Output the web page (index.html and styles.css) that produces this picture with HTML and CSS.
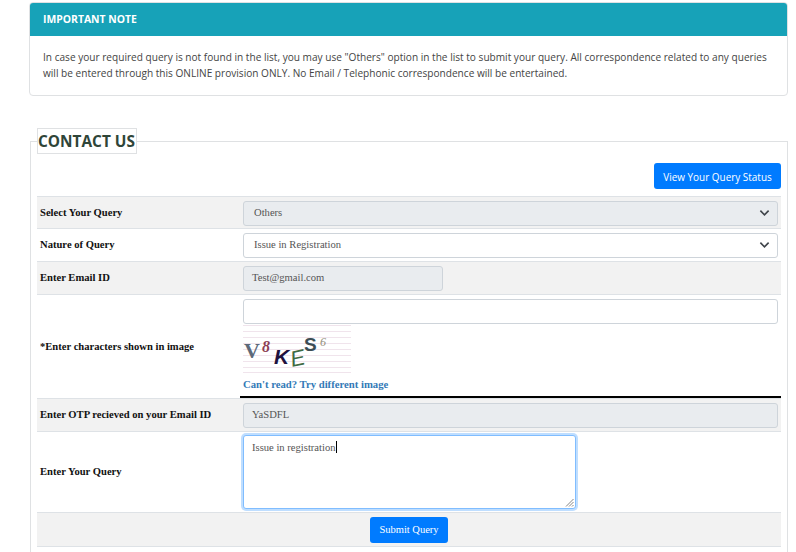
FILE: index.html
```html
<!DOCTYPE html>
<html lang="en">
<head>
<meta charset="utf-8">
<title>Contact Us</title>
<link rel="stylesheet" href="styles.css">
</head>
<body>
<main class="page">
  <section class="note">
    <h2 class="note-head">IMPORTANT NOTE</h2>
    <p class="note-body">In case your required query is not found in the list, you may use "Others" option in the list to submit your query. All correspondence related to any queries will be entered through this ONLINE provision ONLY. No Email / Telephonic correspondence will be entertained.</p>
  </section>
  <fieldset class="contact">
    <legend class="contact-title">CONTACT US</legend>
    <div class="status-row"><button class="btn btn-status" type="button">View Your Query Status</button></div>
    <table class="form-table">
      <tbody>
        <tr class="shade first">
          <th>Select Your Query</th>
          <td><div class="select disabled"><span>Others</span><svg class="chev" viewBox="0 0 12 8"><path d="M1.5 1.5 6 6l4.5-4.5" /></svg></div></td>
        </tr>
        <tr>
          <th>Nature of Query</th>
          <td><div class="select"><span>Issue in Registration</span><svg class="chev" viewBox="0 0 12 8"><path d="M1.5 1.5 6 6l4.5-4.5" /></svg></div></td>
        </tr>
        <tr class="shade">
          <th>Enter Email ID</th>
          <td><div class="field disabled short">Test@gmail.com</div></td>
        </tr>
        <tr>
          <th>*Enter characters shown in image</th>
          <td class="captcha-cell">
            <div class="field"></div>
            <svg class="captcha" viewBox="0 0 108 50" role="img" aria-label="captcha">
              <g class="captcha-lines">
                <path d="M0 1.5h108M0 7.5h108M0 13.5h108M0 19.5h108M0 25.5h108M0 31.5h108M0 37.5h108M0 43.5h108M0 48.5h108" />
              </g>
              <text class="c-v" x="1" y="34">V</text>
              <text class="c-8" x="19" y="28">8</text>
              <text class="c-k" x="31" y="40">K</text>
              <text class="c-e" transform="translate(49 43) rotate(-12)">E</text>
              <text class="c-s" x="61" y="27">S</text>
              <text class="c-6" x="77" y="22">6</text>
            </svg>
            <a class="refresh" href="#">Can't read? Try different image</a>
          </td>
        </tr>
        <tr class="shade">
          <th>Enter OTP recieved on your Email ID</th>
          <td><div class="field disabled">YaSDFL</div></td>
        </tr>
        <tr>
          <th>Enter Your Query</th>
          <td class="query-cell">
            <div class="textarea"><span>Issue in registration</span><i class="caret"></i>
              <svg class="grip" viewBox="0 0 9 9"><path d="M8.5 1 1 8.5M8.5 4 4 8.5M8.5 7 7 8.5" /></svg>
            </div>
          </td>
        </tr>
        <tr class="shade last">
          <td colspan="2" class="submit-cell"><button class="btn btn-submit" type="submit">Submit Query</button></td>
        </tr>
      </tbody>
    </table>
  </fieldset>
</main>
</body>
</html>
```
FILE: styles.css
```css
* { box-sizing: border-box; }
html, body { margin: 0; padding: 0; background: #fff; height: 552px; overflow: hidden; }
body { font-family: "Liberation Serif", serif; color: #111; }
.page { padding: 2px 8px 0 29px; }

.note { border: 1px solid #dfe1e3; border-radius: 4px; height: 94px; overflow: hidden; }
.note-head { margin: 0; height: 33px; background: #17a2b8; color: #fff; font: 700 10.4px/32px "Open Sans", sans-serif; padding-left: 13px; }
.note-body { margin: 0; padding: 13px 13px 0; font: 400 10.1px/16px "Open Sans", sans-serif; color: #444; }

.contact { margin: 32px 0 0 1px; padding: 0 6px; border: 1px solid #dfe1e3; border-bottom: 0; height: 424px; min-width: 0; }
.contact-title { padding: 0; height: 26px; width: 100px; margin-bottom: -3px; border: 1px solid #dfe1e3; color: #2f4538; font: 700 15.4px/25px "Open Sans", sans-serif; white-space: nowrap; text-align: left; }

.status-row { display: flex; justify-content: flex-end; margin-top: 12px; height: 33px; }
.btn { border: 0; background: #007bff; color: #fff; border-radius: 3px; }
.btn-status { width: 127px; height: 26px; font: 400 9.95px/14px "Open Sans", sans-serif; padding: 2px 0 0; }
.btn-submit { width: 78px; height: 26px; font: 400 10.5px/26px "Liberation Serif", serif; padding: 0; }

.form-table { width: 744px; border-collapse: separate; border-spacing: 0; table-layout: fixed; }
.form-table th, .form-table td { border-top: 1px solid #dee2e6; padding: 3.5px 3px 3.5px; vertical-align: middle; }
.form-table th { width: 203px; text-align: left; font: 700 10.6px/14px "Liberation Serif", serif; color: #111; }
.form-table td { font: 400 10.6px/14px "Liberation Serif", serif; color: #555; padding-right: 3.5px; }
.form-table .first th, .form-table .first td { padding-bottom: 2.5px; }
.shade th, .shade td { background: #f2f2f2; }
.last td { border-bottom: 1px solid #dee2e6; }

.select, .field { height: 25px; width: 100%; border: 1px solid #ced4da; border-radius: 3px; background: #fff; display: flex; align-items: center; justify-content: space-between; color: #555; }
.select { padding: 0 7px 0 10px; }
.field { padding: 0 8px; }
.disabled { background: #e9ecef; }
.short { width: 200px; }
.chev { width: 11px; height: 8px; fill: none; stroke: #3f444a; stroke-width: 1.8; }

.form-table td.captcha-cell { padding-bottom: 0; border-bottom: 2px solid #000; height: 104px; vertical-align: top; }
.captcha { display: block; width: 108px; height: 50px; }
.captcha-lines path { stroke: #f0e4ec; stroke-width: 1; fill: none; }
.captcha text { font-family: "Liberation Sans", sans-serif; font-weight: 700; }
.captcha .c-v { font: 700 22px "Liberation Serif", serif; fill: #5d6a7a; }
.captcha .c-8 { font: italic 700 16px "Liberation Serif", serif; fill: #8d3f55; }
.captcha .c-k { font-size: 21px; font-style: italic; fill: #20123f; }
.captcha .c-e { font-size: 22px; font-weight: 400; font-style: italic; fill: #3e6a43; }
.captcha .c-s { font-size: 19px; fill: #3c4d55; }
.captcha .c-6 { font: italic 400 12px "Liberation Serif", serif; fill: #94907c; }
.refresh { display: block; margin-top: 3px; color: #337ab7; font: 700 10.7px/14px "Liberation Serif", serif; text-decoration: none; }

.form-table td.query-cell { padding-top: 3px; padding-bottom: 3px; }
.textarea { position: relative; width: 333px; height: 74px; border: 1px solid #80bdff; border-radius: 3px; box-shadow: 0 0 0 2px rgba(0,123,255,.25); padding: 5px 8px; background: #fff; color: #555; }
.caret { display: inline-block; width: 1px; height: 12px; background: #000; vertical-align: -2px; }
.grip { position: absolute; right: 1px; bottom: 1px; width: 9px; height: 9px; fill: none; stroke: #666; stroke-width: .8; }
.form-table td.submit-cell { text-align: center; padding: 4px 3px 3px; }
```
